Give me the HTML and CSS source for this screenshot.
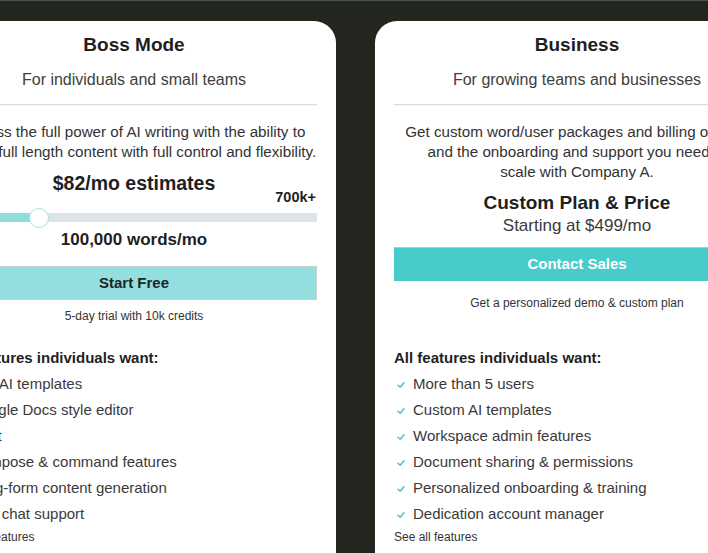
FILE: index.html
```html
<!DOCTYPE html>
<html lang="en">
<head>
<meta charset="utf-8">
<title>Pricing</title>
<link rel="stylesheet" href="styles.css">
</head>
<body>
<div class="cards">
  <section class="card">
    <h2 class="title">Boss Mode</h2>
    <p class="subtitle">For individuals and small teams</p>
    <hr class="divider">
    <p class="desc">Access the full power of AI writing with the ability to<br>create full length content with full control and flexibility.</p>
    <div class="price">$82/mo estimates</div>
    <div class="slider-max">700k+</div>
    <div class="track">
      <div class="fill" style="width: 88px"></div>
      <div class="thumb" style="left: 78px"></div>
    </div>
    <div class="words">100,000 words/mo</div>
    <a class="btn btn-light">Start Free</a>
    <p class="note note-trial">5-day trial with 10k credits</p>
    <h3 class="feat-head">All features individuals want:</h3>
    <ul class="features">
      <li><svg class="check" viewBox="0 0 9 9"><path d="M1.2 4.8 L3.6 7 L7.8 2"/></svg>50+ AI templates</li>
      <li><svg class="check" viewBox="0 0 9 9"><path d="M1.2 4.8 L3.6 7 L7.8 2"/></svg>Google Docs style editor</li>
      <li><svg class="check" viewBox="0 0 9 9"><path d="M1.2 4.8 L3.6 7 L7.8 2"/></svg>Chat</li>
      <li><svg class="check" viewBox="0 0 9 9"><path d="M1.2 4.8 L3.6 7 L7.8 2"/></svg>Compose &amp; command features</li>
      <li><svg class="check" viewBox="0 0 9 9"><path d="M1.2 4.8 L3.6 7 L7.8 2"/></svg>Long-form content generation</li>
      <li><svg class="check" viewBox="0 0 9 9"><path d="M1.2 4.8 L3.6 7 L7.8 2"/></svg>Live chat support</li>
    </ul>
    <a class="see-all">See all features</a>
  </section>

  <section class="card">
    <h2 class="title">Business</h2>
    <p class="subtitle">For growing teams and businesses</p>
    <hr class="divider">
    <p class="desc">Get custom word/user packages and billing options<br>and the onboarding and support you need to<br>scale with Company A.</p>
    <div class="plan">Custom Plan &amp; Price</div>
    <div class="starting">Starting at $499/mo</div>
    <a class="btn btn-dark">Contact Sales</a>
    <p class="note note-demo">Get a personalized demo &amp; custom plan</p>
    <h3 class="feat-head feat-head-biz">All features individuals want:</h3>
    <ul class="features">
      <li><svg class="check" viewBox="0 0 9 9"><path d="M1.2 4.8 L3.6 7 L7.8 2"/></svg>More than 5 users</li>
      <li><svg class="check" viewBox="0 0 9 9"><path d="M1.2 4.8 L3.6 7 L7.8 2"/></svg>Custom AI templates</li>
      <li><svg class="check" viewBox="0 0 9 9"><path d="M1.2 4.8 L3.6 7 L7.8 2"/></svg>Workspace admin features</li>
      <li><svg class="check" viewBox="0 0 9 9"><path d="M1.2 4.8 L3.6 7 L7.8 2"/></svg>Document sharing &amp; permissions</li>
      <li><svg class="check" viewBox="0 0 9 9"><path d="M1.2 4.8 L3.6 7 L7.8 2"/></svg>Personalized onboarding &amp; training</li>
      <li><svg class="check" viewBox="0 0 9 9"><path d="M1.2 4.8 L3.6 7 L7.8 2"/></svg>Dedication account manager</li>
    </ul>
    <a class="see-all">See all features</a>
  </section>
</div>
</body>
</html>
```

FILE: styles.css
```css
html, body {
  overflow: hidden;
}

body {
  margin: 0;
  background: #22261f;
  border-top: 1px solid #4e524c;
  font-family: "Liberation Sans", Arial, sans-serif;
  color: #333;
}

.cards {
  display: flex;
  gap: 39px;
  margin-left: -68px;
  padding-top: 20px;
}

.card {
  flex: 0 0 404px;
  box-sizing: border-box;
  background: #fff;
  border-radius: 22px 22px 0 0;
  padding: 12px 19px 40px;
  min-height: 600px;
  display: flex;
  flex-direction: column;
  text-align: center;
}

.title {
  margin: 0;
  font-size: 19px;
  line-height: 24px;
  font-weight: 700;
  color: #1f1f1f;
}

.subtitle {
  margin: 13px 0 0;
  font-size: 16px;
  line-height: 20px;
  color: #404040;
}

.divider {
  margin: 14px 0 0;
  border: 0;
  height: 1px;
  background: #dadddd;
  box-shadow: 0 1px 1px rgba(0, 0, 0, 0.04);
}

.desc {
  margin: 17px -10px 0;
  font-size: 15.2px;
  line-height: 20px;
  white-space: nowrap;
  color: #333;
}

.price {
  margin-top: 9px;
  font-size: 19.5px;
  line-height: 24px;
  font-weight: 700;
  color: #1f1f1f;
}

.slider-max {
  margin-top: -6px;
  text-align: right;
  font-size: 14.5px;
  line-height: 16px;
  font-weight: 700;
  color: #1f1f1f;
  padding-right: 1px;
}

.track {
  position: relative;
  margin-top: 8px;
  height: 9px;
  background: #dde3e6;
}

.fill {
  height: 100%;
  background: #8fdddd;
}

.thumb {
  position: absolute;
  top: -5px;
  width: 18px;
  height: 18px;
  border-radius: 50%;
  background: #fff;
  border: 1px solid #a8e2e4;
}

.words {
  margin-top: 7px;
  font-size: 17px;
  line-height: 22px;
  font-weight: 700;
  color: #1f1f1f;
}

.btn {
  display: block;
  box-sizing: border-box;
  height: 34px;
  line-height: 32px;
  font-size: 15px;
  font-weight: 700;
  text-align: center;
}

.btn-light {
  margin-top: 15px;
  background: #93dfe0;
  border: 1px solid #c8d0d0;
  color: #1d2626;
}

.btn-dark {
  margin-top: 11px;
  background: #48cbcb;
  border: 1px solid #48cbcb;
  border-top-color: #b9c6c6;
  color: #fff;
}

.note {
  margin: 0;
  font-size: 12px;
  line-height: 16px;
  color: #333;
}

.note-trial {
  margin-top: 8px;
}

.note-demo {
  margin-top: 14px;
}

.plan {
  margin-top: 9px;
  font-size: 19px;
  line-height: 24px;
  font-weight: 700;
  color: #1f1f1f;
}

.starting {
  margin-top: 1px;
  font-size: 17px;
  line-height: 20px;
  color: #3a3a3a;
}

.feat-head {
  margin: 24px 0 0;
  text-align: left;
  font-size: 15px;
  line-height: 20px;
  font-weight: 700;
  color: #1f1f1f;
}

.feat-head-biz {
  margin-top: 37px;
}

.features {
  list-style: none;
  margin: 2px 0 0;
  padding: 0;
  text-align: left;
}

.features li {
  display: flex;
  align-items: center;
  height: 26px;
  font-size: 15px;
  color: #3a3a3a;
}

.check {
  flex: 0 0 8px;
  width: 8px;
  height: 8px;
  margin: 3px 8px 0 3px;
  fill: none;
  stroke: #4cc6c3;
  stroke-width: 1.8;
  stroke-linecap: round;
  stroke-linejoin: round;
}

.see-all {
  margin-top: 3px;
  text-align: left;
  font-size: 12px;
  line-height: 16px;
  color: #333;
}
```
